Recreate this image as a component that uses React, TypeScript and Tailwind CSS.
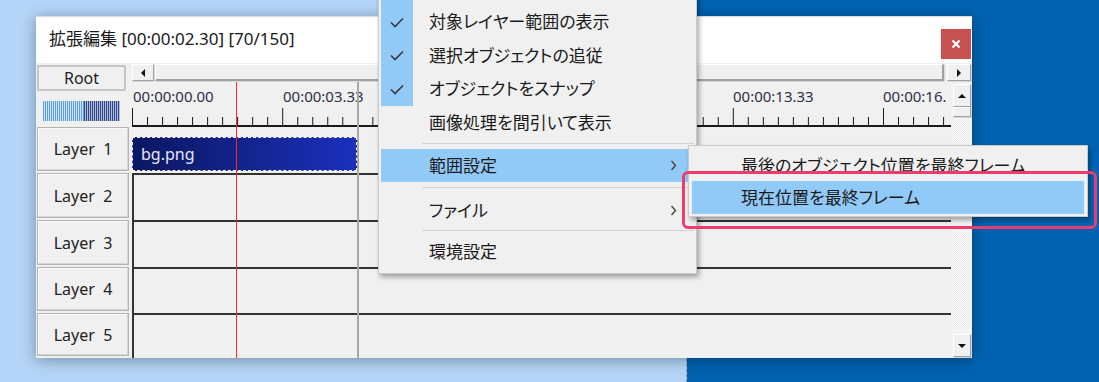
import React from "react";

const jp = "font-['Noto_Sans','Noto_Sans_CJK_JP',sans-serif]";

function Check() {
  return (
    <svg width="14" height="11" viewBox="0 0 14 11" fill="none">
      <polyline points="1,5.5 5,9.5 13,1.5" stroke="#3a3a3a" strokeWidth="1.6" />
    </svg>
  );
}

function Chevron() {
  return (
    <svg width="7" height="11" viewBox="0 0 7 11" fill="none">
      <polyline points="1.5,1 5.5,5.5 1.5,10" stroke="#444" strokeWidth="1.4" />
    </svg>
  );
}

function Ruler() {
  const ticks = [];
  for (let i = 0; i <= 55; i++) {
    const x = i * 15.02 + 0.5;
    const major = i % 10 === 0;
    ticks.push(<line key={i} x1={x} x2={x} y1={major ? 26 : 35} y2={44} stroke="#1a1a1a" strokeWidth="1" />);
  }
  return (
    <svg className="absolute left-0 top-0" width="819" height="45">
      {ticks}
      <line x1="0" x2="819" y1="44" y2="44" stroke="#1a1a1a" strokeWidth="2" />
    </svg>
  );
}

// labels under the context menu are covered, only the visible ones are drawn
const labels = [
  { t: "00:00:00.00", x: "left-[1px]" },
  { t: "00:00:03.33", x: "left-[151px]" },
  { t: "00:00:13.33", x: "left-[601px]" },
  { t: "00:00:16.", x: "left-[751px]" },
];

const rows = [
  { h: "h-[46px]", n: 1 },
  { h: "h-[47px]", n: 2 },
  { h: "h-[47px]", n: 3 },
  { h: "h-[46px]", n: 4 },
  { h: "h-[45px]", n: 5 },
];

function Arrow({ dir }: { dir: "l" | "r" | "u" | "d" }) {
  const pts =
    dir === "l" ? "5,0 5,8 1,4" : dir === "r" ? "1,0 1,8 5,4" : dir === "u" ? "0,5 8,5 4,1" : "0,1 8,1 4,5";
  const w = dir === "l" || dir === "r" ? 6 : 8;
  const h = dir === "l" || dir === "r" ? 8 : 6;
  return (
    <svg width={w} height={h} viewBox={`0 0 ${w} ${h}`}>
      <polygon points={pts} fill="#111" />
    </svg>
  );
}

const raised = "bg-[#f0f0f0] border border-t-white border-l-white border-r-[#a0a0a0] border-b-[#a0a0a0] shadow-[1px_1px_0_#d8d8d8]";

export default function App() {
  return (
    <div className={`relative w-[1099px] h-[382px] overflow-hidden flex ${jp}`}>
      <div className="w-[687px] h-full bg-[#b4d5f8] border-r border-dashed border-[#8aa0b8]" />
      <div className="flex-1 h-full bg-[#0063b1]" />

      {/* window */}
      <div className="absolute left-[36px] top-[16px] w-[936px] h-[342px] flex flex-col bg-white shadow-[0_2px_14px_rgba(0,0,0,0.35)] border-t border-[#d9d9d9]">
        <div className="h-[46px] bg-white flex justify-between pl-[13px] pr-px">
          <div className="self-center text-[17px] text-[#1a1a1a] pb-[2px]">拡張編集 [00:00:02.30] [70/150]</div>
          <div className="mt-[12px] w-[30px] h-[30px] bg-[#c75050] flex items-center justify-center">
            <svg width="10" height="10" viewBox="0 0 10 10">
              <path d="M1.5 1.5 L8.5 8.5 M8.5 1.5 L1.5 8.5" stroke="#fff" strokeWidth="2.2" />
            </svg>
          </div>
        </div>

        <div className="flex-1 bg-[#f0f0f0] flex">
          {/* left column */}
          <div className="w-[96px] flex flex-col pl-px">
            <div className="mt-[2px] w-[89px] h-[26px] border-2 border-[#c6c6c6] bg-[#f0f0f0] flex items-center justify-center text-[16px] text-[#222]">
              Root
            </div>
            <div className="mt-[10px] ml-[6px] h-[20px] flex">
              <div className="w-[41px] h-full flex gap-px bg-[#cfe2f8]">
                {Array.from({ length: 21 }).map((_, i) => (
                  <div key={i} className="w-px h-full bg-[#5b9ff0]" />
                ))}
              </div>
              <div className="w-[36px] h-full flex gap-px bg-[#b3bed8]">
                {Array.from({ length: 18 }).map((_, i) => (
                  <div key={i} className="w-px h-full bg-[#2e4488]" />
                ))}
              </div>
            </div>
            <div className="mt-[6px] flex flex-col">
              {rows.map((r) => (
                <div key={r.n} className={`${r.h} pb-[2px]`}>
                  <div className="w-[92px] h-full border border-[#b4b4b4] shadow-[inset_-1px_-1px_0_#d6d6d6,inset_1px_1px_0_#fafafa] bg-[#f0f0f0] flex items-center justify-center text-[16px] text-[#222] whitespace-pre">
                    {`Layer  ${r.n}`}
                  </div>
                </div>
              ))}
            </div>
          </div>

          {/* right area */}
          <div className="flex-1 flex flex-col">
            <div className="h-[19px] flex items-start pt-px">
              <div className={`w-[22px] h-[17px] flex items-center justify-center ${raised}`}>
                <Arrow dir="l" />
              </div>
              <div className={`ml-px w-[789px] h-[17px] ${raised} border-b-2 border-r-2`} />
              <div className={`ml-[3px] w-[24px] h-[17px] flex items-center justify-center ${raised}`}>
                <Arrow dir="r" />
              </div>
            </div>

            <div className="flex-1 flex">
              <div className="relative w-[819px] flex flex-col">
                <div className="relative h-[45px]">
                  <Ruler />
                  {labels.map((l) => (
                    <span key={l.t} className={`absolute top-[3px] ${l.x} text-[15px] leading-[22px] text-[#2e3148] font-['Noto_Sans',sans-serif] whitespace-nowrap`}>
                      {l.t}
                    </span>
                  ))}
                </div>
                {rows.map((r) => (
                  <div
                    key={r.n}
                    className={`${r.h} relative ${r.n > 1 ? "border-t-2 border-l-2 border-[#333]" : ""}`}
                  >
                    {r.n === 1 && (
                      <div className="absolute left-0 top-[10px] w-[225px] h-[34px] border border-dashed border-white bg-gradient-to-r from-[#0b1762] to-[#1b30bc] flex items-center pl-[8px] text-[16px] text-[#e6e8f5] font-['Noto_Sans',sans-serif]">
                        bg.png
                        <div className="absolute left-[103px] top-0 bottom-0 w-px bg-[#2bbf6e]" />
                      </div>
                    )}
                  </div>
                ))}
                <div className="absolute left-[225px] top-0 bottom-0 w-[2px] bg-[#a8a8a8]" />
                <div className="absolute left-[104px] top-0 bottom-0 w-px bg-[#ff2626]" />
              </div>

              {/* vertical scrollbar */}
              <div className="ml-[2px] w-[18px] flex flex-col pb-px bg-[repeating-conic-gradient(#ebebeb_0_25%,#fbfbfb_0_50%)] bg-[length:2px_2px]">
                <div className={`mt-[2px] h-[23px] flex items-center justify-center ${raised}`}>
                  <Arrow dir="u" />
                </div>
                <div className={`h-[10px] ${raised}`} />
                <div className="flex-1" />
                <div className={`h-[23px] flex items-center justify-center ${raised}`}>
                  <Arrow dir="d" />
                </div>
              </div>
            </div>
          </div>
        </div>
      </div>

      {/* context menu */}
      <div className="absolute left-[378px] top-[-30px] w-[319px] bg-[#f0f0f0] border border-[#cbcbcb] shadow-[2px_3px_5px_rgba(0,0,0,0.35)] pt-[2px] px-[2px] pb-[5px] text-[17px] text-[#1a1a1a] [font-feature-settings:'palt']">
        <div className="h-[32px] flex">
          <div className="w-[32px] bg-[#91c9f7]" />
        </div>
        {[
          { t: "対象レイヤー範囲の表示", h: "h-[34px]" },
          { t: "選択オブジェクトの追従", h: "h-[33px]" },
          { t: "オブジェクトをスナップ", h: "h-[34px]" },
        ].map((it) => (
          <div key={it.t} className={`${it.h} flex items-center`}>
            <div className="w-[32px] h-full bg-[#91c9f7] flex items-center justify-center">
              <Check />
            </div>
            <span className="pl-[16px]">{it.t}</span>
          </div>
        ))}
        <div className="h-[33px] flex items-center pl-[48px]">画像処理を間引いて表示</div>
        <div className="h-[10px] pl-[41px] pt-[4px]">
          <div className="h-px bg-[#d4d4d4]" />
        </div>
        <div className="h-[33px] flex items-center pl-[48px] pr-[17px] justify-between bg-[#91c9f7]">
          <span>範囲設定</span>
          <Chevron />
        </div>
        <div className="h-[12px] pl-[41px] pt-[5px]">
          <div className="h-px bg-[#d4d4d4]" />
        </div>
        <div className="h-[33px] flex items-center pl-[48px] pr-[17px] justify-between">
          <span>ファイル</span>
          <Chevron />
        </div>
        <div className="h-[8px] pl-[41px] pt-[3px]">
          <div className="h-px bg-[#d4d4d4]" />
        </div>
        <div className="h-[33px] flex items-center pl-[48px]">環境設定</div>
      </div>

      {/* submenu */}
      <div className="absolute left-[688px] top-[145px] w-[400px] bg-[#f0f0f0] border border-[#cbcbcb] shadow-[2px_3px_5px_rgba(0,0,0,0.35)] px-[3px] py-[2px] text-[17px] text-[#1a1a1a] [font-feature-settings:'palt']">
        <div className="h-[33px] flex items-center pl-[49px] pt-[3px]">最後のオブジェクト位置を最終フレーム</div>
        <div className="h-[33px] flex items-center pl-[49px] bg-[#91c9f7]">現在位置を最終フレーム</div>
      </div>

      {/* highlight box */}
      <div className="absolute left-[682px] top-[171px] w-[415px] h-[58px] border-[3px] border-[#ee3b6e] rounded-[6px]" />
    </div>
  );
}
